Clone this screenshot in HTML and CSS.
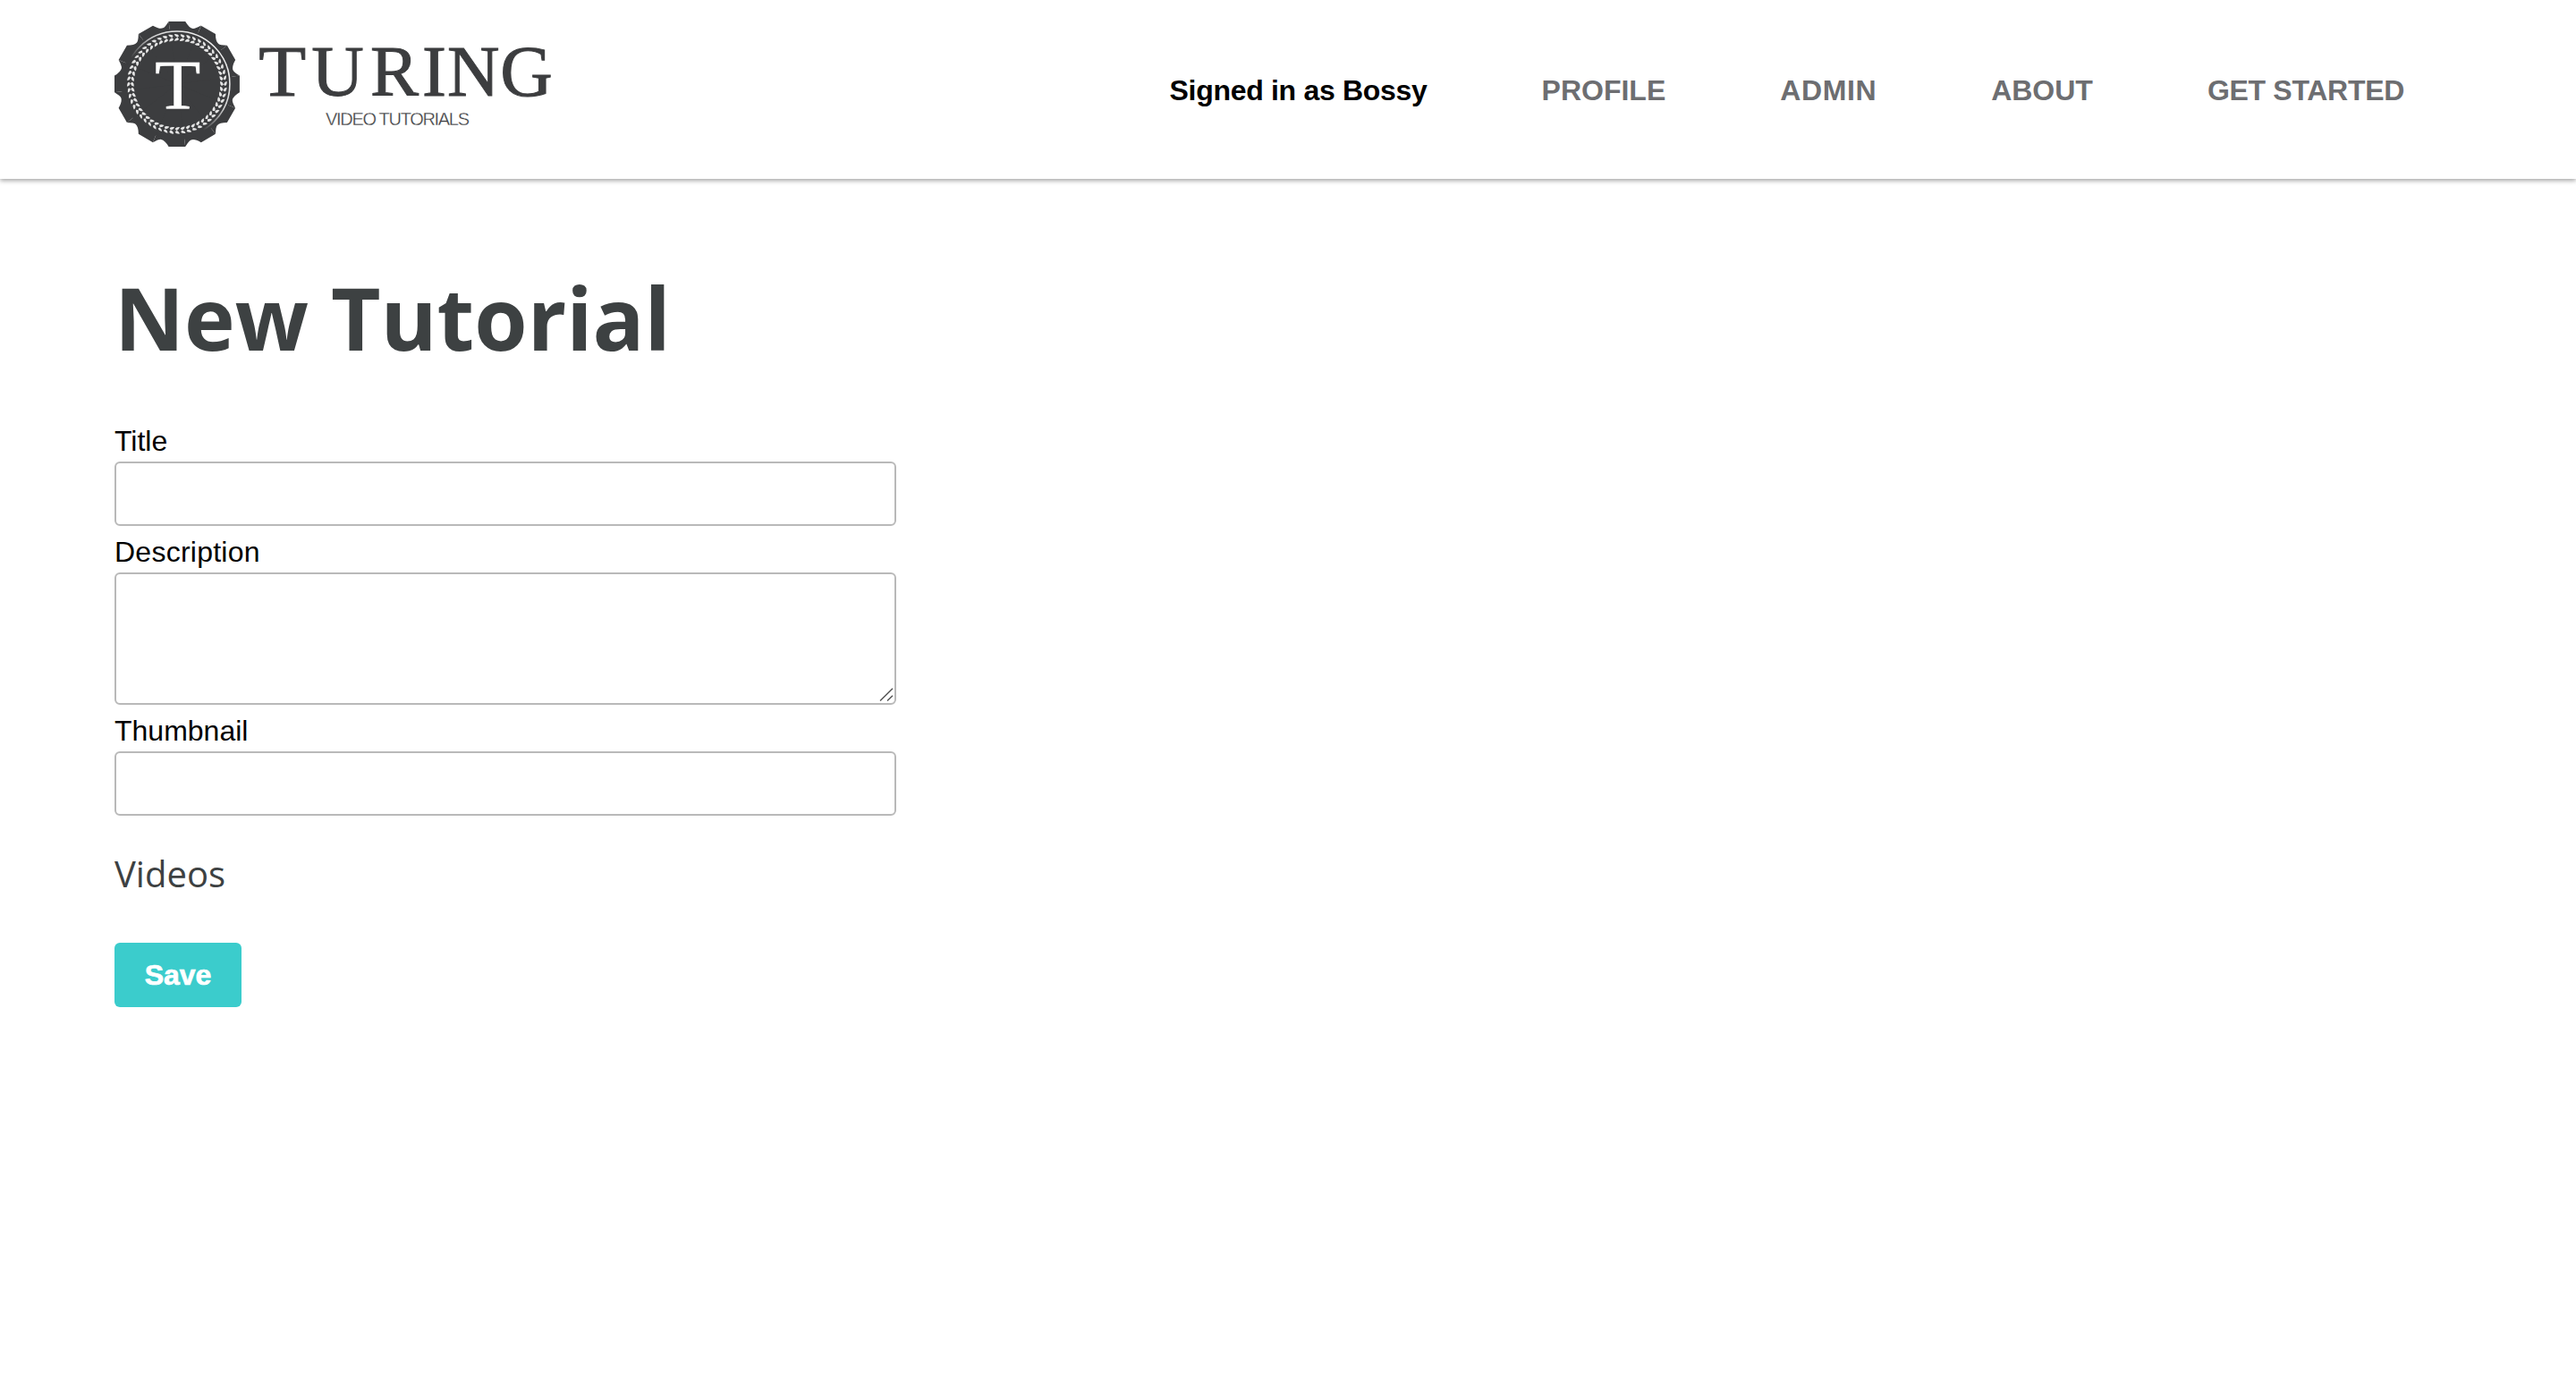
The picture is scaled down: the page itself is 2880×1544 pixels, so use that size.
FILE: index.html
```html
<!DOCTYPE html>
<html lang="en">
<head>
<meta charset="utf-8">
<title>Turing Video Tutorials</title>
<link rel="stylesheet" href="styles.css">
</head>
<body>
<header class="site-header">
  <a class="logo">
    <svg class="logo-art" width="500" height="160" viewBox="128 14 500 160">
      <defs>
        <g id="leaf">
          <path d="M-2.9 -48.2 Q-2.6 -51 .8 -52 L2.2 -50 Q1 -48 -2.9 -48.2Z"/>
          <path d="M-2.9 -55.8 Q-2.6 -53.2 .8 -52.2 L2.2 -54 Q1 -56 -2.9 -55.8Z"/>
        </g>
        <g id="leaf4"><use href="#leaf"/><use href="#leaf" transform="rotate(90)"/><use href="#leaf" transform="rotate(180)"/><use href="#leaf" transform="rotate(270)"/></g>
        <g id="tooth"><path d="M0 0 L-9.3 -70 L9.3 -70 Q13.5 -62.8 17.7 -62 Q20 -61.5 26.9 -65.3 Z"/></g>
        <g id="teeth3"><use href="#tooth"/><use href="#tooth" transform="rotate(30)"/><use href="#tooth" transform="rotate(60)"/></g>
        <linearGradient id="ring" x1="1" y1="0" x2="0.15" y2="0.85">
          <stop offset="0" stop-color="#fff"/><stop offset=".45" stop-color="#fff" stop-opacity=".8"/><stop offset=".7" stop-color="#fff" stop-opacity="0"/>
        </linearGradient>
      </defs>
      <g transform="translate(197.9 93.9)">
        <g class="seal"><circle r="62"/><use href="#teeth3"/><use href="#teeth3" transform="rotate(90)"/><use href="#teeth3" transform="rotate(180)"/><use href="#teeth3" transform="rotate(270)"/></g>
        <circle r="59" fill="none" stroke="url(#ring)" stroke-width="1.5"/>
        <g class="braid">
          <use href="#leaf4"/><use href="#leaf4" transform="rotate(6.923)"/><use href="#leaf4" transform="rotate(13.846)"/><use href="#leaf4" transform="rotate(20.769)"/><use href="#leaf4" transform="rotate(27.692)"/><use href="#leaf4" transform="rotate(34.615)"/><use href="#leaf4" transform="rotate(41.538)"/><use href="#leaf4" transform="rotate(48.462)"/><use href="#leaf4" transform="rotate(55.385)"/><use href="#leaf4" transform="rotate(62.308)"/><use href="#leaf4" transform="rotate(69.231)"/><use href="#leaf4" transform="rotate(76.154)"/><use href="#leaf4" transform="rotate(83.077)"/>
        </g>
        <text class="seal-letter" x="0" y="27" text-anchor="middle" transform="translate(.8 0) scale(1.07 1)">T</text>
      </g>
      <text class="wordmark" transform="translate(289.3 107) scale(1.07 1)">T</text>
      <text class="wordmark" y="107" x="348.2 414 472 500 559.2">URING</text>
      <text class="tagline" x="364" y="139.8" textLength="161">VIDEO TUTORIALS</text>
    </svg>
  </a>
  <nav class="nav">
    <span class="nav-item user">Signed in as Bossy</span>
    <a class="nav-item">PROFILE</a>
    <a class="nav-item admin">ADMIN</a>
    <a class="nav-item">ABOUT</a>
    <a class="nav-item start">GET STARTED</a>
  </nav>
</header>
<main class="content">
  <h1 class="title">New Tutorial</h1>
  <form class="form">
    <label class="label" for="t">Title</label>
    <input class="field" id="t" type="text">
    <label class="label wide" for="d">Description</label>
    <div class="area">
      <textarea class="field field-tall" id="d"></textarea>
      <svg class="grip" width="16" height="16" viewBox="0 0 16 16"><path d="M1 14.5 15 .8M9 14.5 15 8.8"/></svg>
    </div>
    <label class="label" for="n">Thumbnail</label>
    <input class="field" id="n" type="text">
    <h3 class="subtitle">Videos</h3>
    <button class="save" type="button">Save</button>
  </form>
</main>
</body>
</html>
```
FILE: styles.css
```css
* { box-sizing: border-box; }
body {
  margin: 0;
  background: #fff;
  color: #000;
  font: 32px/40px "Liberation Sans", Arial, sans-serif;
}
.site-header {
  display: flex;
  justify-content: space-between;
  height: 200px;
  padding: 14px 128px 0;
  background: #fff;
  box-shadow: 0 2px 5px rgba(0, 0, 0, .36);
}
.logo-art { display: block; }
.seal { fill: #3c3d3f; }
.braid { fill: #e4e4e4; }
.seal-letter { font: 78px "Liberation Serif", serif; fill: #fff; stroke: #fff; stroke-width: .6px; }
.wordmark { font: 81px "Liberation Serif", serif; fill: #3c3d3f; stroke: #3c3d3f; stroke-width: 1px; }
.tagline { font: 20px "Liberation Sans", sans-serif; fill: #3c3d3f; stroke: #fff; stroke-width: .3px; }
.nav { display: flex; padding-top: 67px; }
.nav-item {
  padding: 0 64px;
  font-weight: 700;
  color: #6d6e71;
  white-space: nowrap;
}
.user { color: #000; letter-spacing: -.3px; }
.admin { letter-spacing: .6px; }
.start { letter-spacing: -.3px; }
.content { padding: 89px 128px 0; }
.title {
  margin: 0;
  font: 700 96px/132px "Open Sans", sans-serif;
  color: #3d4142;
}
.form {
  display: flex;
  flex-direction: column;
  align-items: flex-start;
  width: 874px;
  padding-top: 52px;
}
.label { height: 43px; }
.wide { letter-spacing: .25px; }
.field {
  display: block;
  width: 874px;
  height: 72px;
  margin: 0 0 9px;
  border: 2px solid #b9b9b9;
  border-radius: 6px;
  background: #fff;
}
.area { position: relative; }
.field-tall { height: 148px; resize: none; }
.grip {
  position: absolute;
  right: 3px;
  bottom: 12px;
  fill: none;
  stroke: #555;
  stroke-width: 1.5px;
}
.subtitle {
  margin: 28px 0 0;
  font: 400 40px/56px "Open Sans", sans-serif;
  color: #3d4142;
}
.save {
  width: 142px;
  height: 72px;
  margin-top: 49px;
  padding: 1px 0 0;
  border: 0;
  border-radius: 6px;
  background: #3bcccc;
  color: #fff;
  font: 700 32px/71px "Liberation Sans", sans-serif;
  -webkit-text-stroke: .7px #fff;
}
```
